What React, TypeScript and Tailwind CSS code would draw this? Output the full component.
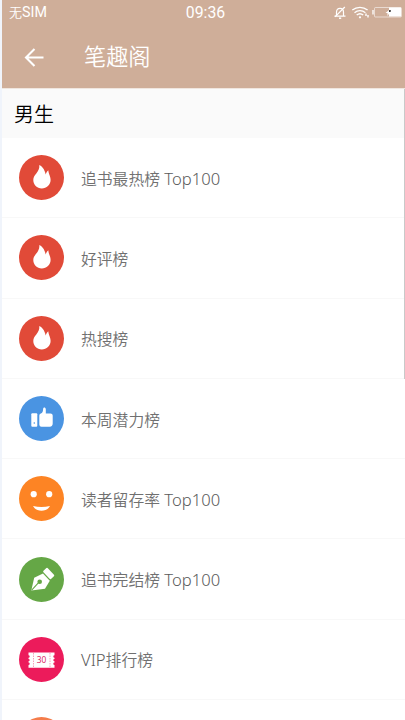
import React from "react";

const Flame = () => (
  <path
    fill="#fff"
    d="M20.300 10c.4 3.500-1 5.800-3 8.600-1.800 2.300-3 3.700-3 6.500 0 4.800 3.700 8.400 8.500 8.400s8.800-3.600 8.800-8.400c0-4-1.900-5.500-2.300-9.900-1.500 1.100-2 2.500-2.600 4.300C25.900 15.800 24.300 12 20.300 10z"
  />
);

const Thumb = () => (
  <g fill="#fff">
    <rect x="12.300" y="17.300" width="6" height="13.400" rx="1" />
    <circle cx="15.300" cy="27" r="0.800" fill="#4a94e2" />
    <path d="M20.300 19.500q0-1.700 1.500-2c1.700-.5 2.200-1.900 2.300-4.300 0-2.300 2.500-2.300 2.700 0v4.200h4.700q2.200 0 2.200 2.200v8q0 3.100-3 3.100h-8.200q-2.200 0-2.200-2.200z" />
  </g>
);

const Smile = () => (
  <g fill="#fff">
    <circle cx="14.700" cy="18.200" r="3.100" />
    <circle cx="30.200" cy="18.200" r="3.100" />
    <path d="M14 30q8.500 2 17 0c-1.800 3.100-4.600 4.800-8.500 4.800S15.800 33.100 14 30z" />
  </g>
);

const Pen = () => (
  <g>
    <path fill="#fff" d="M12.300 33.500l2.900-12.700 8.800-4.300 6.800 7.300-4.800 8z" />
    <path stroke="#65a746" strokeWidth="1.100" d="M12.700 33.200l7.300-8" />
    <circle cx="20.700" cy="24.700" r="2.300" fill="#65a746" />
    <rect x="-5.500" y="-3" width="11" height="6" rx="1" fill="#fff" transform="translate(29.700 16.500) rotate(47)" />
  </g>
);

const Ticket = () => (
  <g>
    <path
      fill="#fff"
      d="M9.500 15.500h26v2.800a1.200 1.200 0 0 0 0 2.400v1.200a1.200 1.200 0 0 0 0 2.400v1.200a1.200 1.200 0 0 0 0 2.400v2.800h-26v-2.800a1.200 1.200 0 0 0 0-2.400v-1.200a1.200 1.200 0 0 0 0-2.400v-1.200a1.200 1.200 0 0 0 0-2.400z"
    />
    <path stroke="#ec1b5b" strokeOpacity="0.700" strokeWidth="0.600" strokeDasharray="1.500 1" d="M14.500 16v14.500M31 16v14.500" />
    <text x="22.600" y="26.100" textAnchor="middle" fontSize="8.400" fill="#d81b60" className="font-['Open_Sans',sans-serif] font-medium">
      30
    </text>
  </g>
);

const rows: { pre?: string; label: string; post?: string; color: string; icon: React.ReactNode }[] = [
  { label: "追书最热榜", post: " Top100", color: "#e14a38", icon: <Flame /> },
  { label: "好评榜", color: "#e14a38", icon: <Flame /> },
  { label: "热搜榜", color: "#e14a38", icon: <Flame /> },
  { label: "本周潜力榜", color: "#4a94e2", icon: <Thumb /> },
  { label: "读者留存率", post: " Top100", color: "#fd8424", icon: <Smile /> },
  { label: "追书完结榜", post: " Top100", color: "#65a746", icon: <Pen /> },
  { pre: "VIP", label: "排行榜", color: "#ec1b5b", icon: <Ticket /> },
  { label: "", color: "#f47c4b", icon: null },
];

const Latin = ({ children }: { children: React.ReactNode }) => (
  <span className="text-[16.600px] text-[#5a5a5a]">{children}</span>
);

function StatusIcons() {
  return (
    <svg width="72" height="16" viewBox="0 0 72 16" fill="none" stroke="#fff">
      <g strokeWidth="1.200">
        <path d="M3.500 11V7.300C3.500 4.700 4.700 3.300 7 3.300s3.500 1.400 3.500 4V11M1.500 11.200h11" />
        <path d="M11.800 2L2 11.800" />
        <path d="M6 13.200h2.200" strokeWidth="1.500" />
      </g>
      <g strokeWidth="1.300">
        <path d="M19.300 5.100c4.500-3.700 10.800-3.700 15.300 0M21.500 7.700c3.200-2.700 7.700-2.700 10.900 0M23.700 10.100c2-1.700 4.500-1.700 6.500 0" />
        <circle cx="27" cy="12.300" r="1.100" fill="#fff" stroke="none" />
        <path d="M33 8.500V11M35 10v2.500" strokeWidth="1.400" />
      </g>
      <rect x="41.500" y="2.500" width="27" height="9.500" rx="1" strokeOpacity="0.550" />
      <path d="M40 5v4.500" strokeWidth="1.300" />
      <rect x="56" y="2.500" width="12" height="9" fill="#fff" stroke="none" />
      <path d="M52.500 8l3.500-3v2.500l1-.5-2.500 4V8z" fill="#fff" stroke="none" />
      <path d="M56 5l2 .3-.5 1.700H56z" fill="#333" stroke="none" />
    </svg>
  );
}

export default function App() {
  return (
    <div className="relative flex h-[720px] w-[405px] flex-col overflow-hidden border-l-2 border-[#f0f4fb] bg-white font-['Noto_Sans','Noto_Sans_CJK_SC',sans-serif]">
      <header className="h-[88px] shrink-0 bg-[#cfae99] text-white">
        <div className="grid h-[25px] grid-cols-[1fr_auto_1fr] items-center pl-[7px] font-[Roboto,'Noto_Sans_CJK_SC',sans-serif] text-[13px] leading-[25px]">
          <span className="font-[350]">
            无<span className="text-[14.300px] font-normal">SIM</span>
          </span>
          <span className="pr-[3px] text-[15.800px]">09:36</span>
          <span className="flex justify-end">
            <StatusIcons />
          </span>
        </div>
        <div className="flex h-[63px] items-center pl-[22px]">
          <svg width="20" height="20" viewBox="0 0 20 20" fill="none" stroke="#fff" strokeWidth="2.100" className="shrink-0">
            <path d="M19.500 10.500H2M10.500 2L2 10.500l8.500 8.500" />
          </svg>
          <h1 className="ml-[40px] pt-px text-[22.200px] font-[350] leading-[30px]">笔趣阁</h1>
        </div>
      </header>
      <h2 className="h-[50px] shrink-0 border-t border-[#f0e6df] bg-[#fafafa] pl-[12px] text-[20px] font-[350] leading-[51px] text-black">
        男生
      </h2>
      <ul className="shrink-0">
        {rows.map((row, i) => (
          <li key={i} className="flex h-[80.300px] items-center border-b border-[#f8f8f8] pl-[17px]">
            <svg width="45" height="45" viewBox="0 0 45 45" className="shrink-0">
              <circle cx="22.500" cy="22.500" r="22.500" fill={row.color} />
              {row.icon}
            </svg>
            <span className="ml-[17px] pt-[2px] text-[15.800px] font-[350] leading-6 text-[#707070]">
              {row.pre && <Latin>{row.pre}</Latin>}
              {row.label}
              {row.post && <Latin>{row.post}</Latin>}
            </span>
          </li>
        ))}
      </ul>
      <div className="absolute right-0 top-[89px] h-[290px] w-px bg-[#c9c9c9]" />
    </div>
  );
}
